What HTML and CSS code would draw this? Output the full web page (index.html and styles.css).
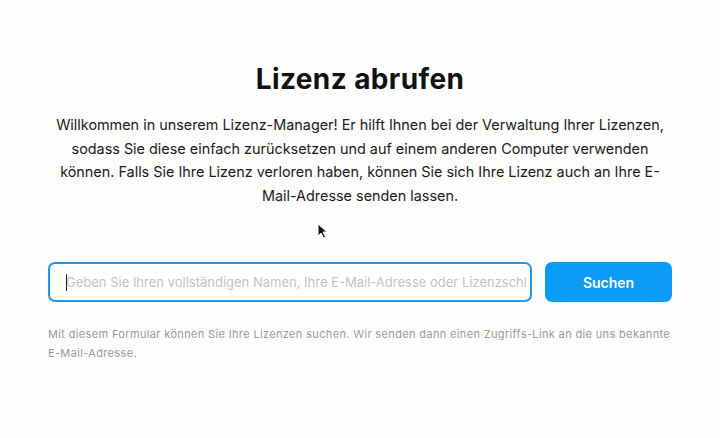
FILE: index.html
```html
<!DOCTYPE html>
<html lang="de">
<head>
  <meta charset="UTF-8" />
  <meta name="viewport" content="width=device-width, initial-scale=1.0"/>
  <title>Lizenz abrufen</title>
  <link rel="stylesheet" href="styles.css">
</head>
<body>

  <main class="page">
    <h1>Lizenz abrufen</h1>

    <p class="intro">
      Willkommen in unserem Lizenz-Manager! Er hilft Ihnen bei der Verwaltung Ihrer Lizenzen,
      sodass Sie diese einfach zurücksetzen und auf einem anderen Computer verwenden
      können. Falls Sie Ihre Lizenz verloren haben, können Sie sich Ihre Lizenz auch an Ihre E-Mail-Adresse senden lassen.
    </p>

    <form class="search-form">
      <div class="search-field">
        <span class="caret"></span>
        <input type="text" placeholder="Geben Sie Ihren vollständigen Namen, Ihre E-Mail-Adresse oder Lizenzschlüssel ein">
      </div>
      <button type="button" class="search-btn">Suchen</button>
    </form>

    <p class="hint">
      Mit diesem Formular können Sie Ihre Lizenzen suchen. Wir senden dann einen Zugriffs-Link an die uns bekannte
      E-Mail-Adresse.
    </p>
  </main>

  <svg class="cursor" width="11" height="16" viewBox="0 0 11 16">
    <path d="M1 1 L1 13 L4 10 L6.5 15 L8.5 14 L6 9 L10 9 Z" fill="#111" stroke="#fff" stroke-width="1"/>
  </svg>

</body>
</html>
```

FILE: styles.css
```css
body {
  margin: 0;
  background-color: #fdfdfc;
  color: #111;
  font-family: "Inter", "Noto Sans", sans-serif;
}
.page {
  max-width: 624px;
  margin: 0 auto;
  padding-top: 62px;
}
h1 {
  text-align: center;
  font-size: 28px;
  font-weight: 700;
  margin: 0 0 17px;
  letter-spacing: 0.4px;
}
.intro {
  text-align: center;
  font-size: 14.4px;
  font-weight: 400;
  line-height: 23.5px;
  margin: 0 0 55px;
  color: #1a1a1a;
}
.search-form {
  display: flex;
  gap: 13px;
  margin-bottom: 23px;
}
.search-field {
  position: relative;
  flex: 1;
  height: 40px;
  border: 2px solid #2196f3;
  border-radius: 7px;
  box-sizing: border-box;
  background: #fff;
}
.search-field input {
  width: 100%;
  height: 100%;
  box-sizing: border-box;
  border: none;
  outline: none;
  background: transparent;
  padding: 0 4px 0 16px;
  font-family: inherit;
  font-size: 13px;
  color: #333;
}
.search-field input::placeholder {
  color: #c2c2c2;
}
.caret {
  position: absolute;
  left: 16px;
  top: 10px;
  width: 1px;
  height: 17px;
  background: #222;
}
.search-btn {
  width: 127px;
  height: 40px;
  border: none;
  border-radius: 7px;
  background-color: #0a9bf7;
  color: #fff;
  font-family: inherit;
  font-size: 14px;
  font-weight: 600;
  cursor: pointer;
}
.hint {
  margin: 0;
  font-size: 11px;
  letter-spacing: 0.35px;
  line-height: 19px;
  color: #9a9a9a;
}
.cursor {
  position: absolute;
  left: 317px;
  top: 223px;
}
```
